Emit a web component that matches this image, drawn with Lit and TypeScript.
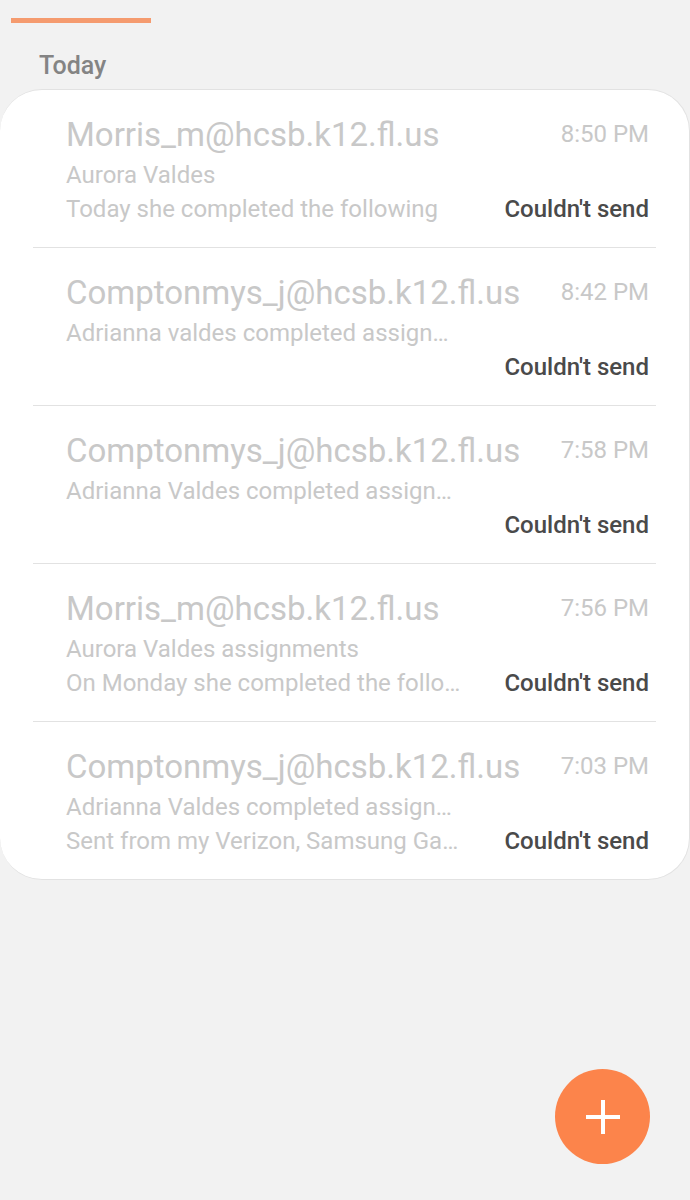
import { css, html, LitElement } from "lit";
import { customElement, property } from "lit/decorators.js";

interface Mail {
	recipient: string;
	time: string;
	subject: string;
	preview: string;
}

const mails: Mail[] = [
	{
		recipient: "Morris_m@hcsb.k12.fl.us",
		time: "8:50 PM",
		subject: "Aurora Valdes",
		preview: "Today she completed the following",
	},
	{
		recipient: "Comptonmys_j@hcsb.k12.fl.us",
		time: "8:42 PM",
		subject: "Adrianna valdes completed assign…",
		preview: "",
	},
	{
		recipient: "Comptonmys_j@hcsb.k12.fl.us",
		time: "7:58 PM",
		subject: "Adrianna Valdes completed assign…",
		preview: "",
	},
	{
		recipient: "Morris_m@hcsb.k12.fl.us",
		time: "7:56 PM",
		subject: "Aurora Valdes assignments",
		preview: "On Monday she completed the follo…",
	},
	{
		recipient: "Comptonmys_j@hcsb.k12.fl.us",
		time: "7:03 PM",
		subject: "Adrianna Valdes completed assign…",
		preview: "Sent from my Verizon, Samsung Ga…",
	},
];

@customElement("mail-item")
export class MailItem extends LitElement {
	static override styles = css`
		:host {
			display: block;
		}

		.item {
			display: grid;
			grid-template-columns: minmax(0, 1fr) auto;
			column-gap: 16px;
			padding: 22px 7px 21px 33px;
			color: #c8c8c8;
			font-size: 24px;
			line-height: 34px;
			white-space: nowrap;
		}

		.recipient {
			font-size: 33px;
			line-height: 46px;
		}

		.time {
			line-height: 44px;
			text-align: right;
		}

		.subject {
			grid-column: 1 / -1;
		}

		.preview {
			overflow: hidden;
			text-overflow: ellipsis;
		}

		.status {
			color: #4a4a4a;
			font-weight: 500;
		}
	`;

	@property({ type: Object })
	mail!: Mail;

	override render() {
		return html`
			<div class="item">
				<span class="recipient">${this.mail.recipient}</span>
				<span class="time">${this.mail.time}</span>
				<span class="subject">${this.mail.subject}</span>
				<span class="preview">${this.mail.preview}</span>
				<span class="status">Couldn't send</span>
			</div>
		`;
	}
}

@customElement("app-root")
export class AppRoot extends LitElement {
	static override styles = css`
		:host {
			display: block;
			box-sizing: border-box;
			min-height: 100vh;
			padding-top: 18px;
			background: #f2f2f2;
			font-family: Roboto, sans-serif;
		}

		.indicator {
			width: 140px;
			height: 5px;
			margin-left: 11px;
			background: #f59b6f;
		}

		.heading {
			margin: 26px 0 6px 39px;
			color: #848484;
			font-size: 25px;
			font-weight: 500;
			line-height: 34px;
		}

		.list {
			margin: 0;
			padding: 0 33px;
			border: 1px solid #e2e2e2;
			border-left: 0;
			border-radius: 42px;
			background: #ffffff;
			list-style: none;
		}

		.row + .row {
			border-top: 1px solid #e2e2e2;
		}

		.compose {
			position: fixed;
			right: 40px;
			bottom: 36px;
			width: 95px;
			height: 95px;
			padding: 0;
			border: 0;
			border-radius: 50%;
			background: #fc844b;
		}

		.plus {
			display: block;
			width: 36px;
			height: 36px;
			margin: auto;
		}
	`;

	override render() {
		return html`
			<div class="indicator"></div>
			<h2 class="heading">Today</h2>
			<ul class="list">
				${mails.map(
					(mail) => html`<li class="row"><mail-item .mail=${mail}></mail-item></li>`
				)}
			</ul>
			<button class="compose" aria-label="Compose">
				<svg class="plus" viewBox="0 0 36 36" aria-hidden="true">
					<path d="M18 1v34M1 18h34" fill="none" stroke="#ffffff" stroke-width="4" />
				</svg>
			</button>
		`;
	}
}
